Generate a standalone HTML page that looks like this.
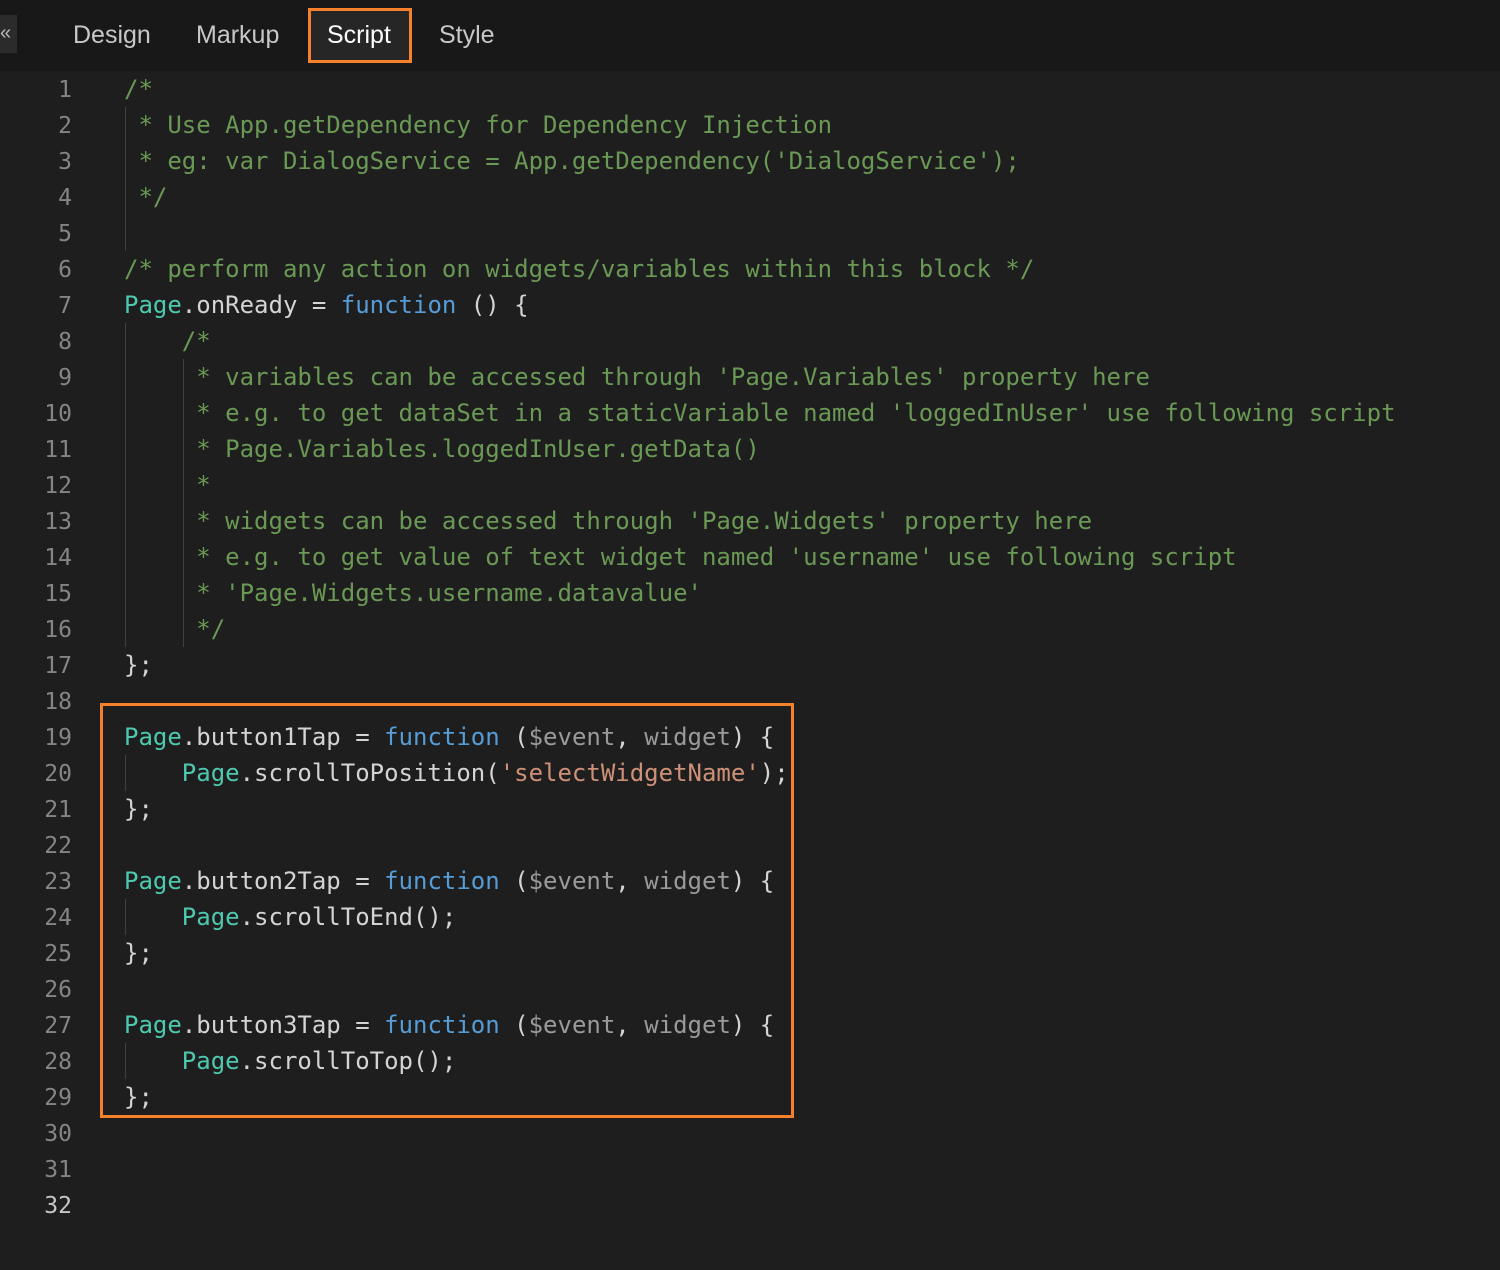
<!DOCTYPE html>
<html><head><meta charset="utf-8"><style>
*{margin:0;padding:0;box-sizing:border-box}
body{width:1500px;height:1270px;background:#1e1e1e;overflow:hidden;position:relative;font-family:"DejaVu Sans Mono","Liberation Mono",monospace}
.bar{position:absolute;left:0;top:0;width:1500px;height:71px;background:#181818}
.tab{position:absolute;top:21px;font:25px "Liberation Sans",sans-serif;color:#c8c8c8}
.coll{position:absolute;left:0;top:15px;width:17px;height:38px;background:#2b2b2b;color:#bbb;font:20px "Liberation Sans",sans-serif;line-height:36px}
.sel{position:absolute;left:308px;top:8px;width:104px;height:55px;border:3px solid #f5822a;background:#262626}
.ln{position:absolute;left:0;width:72px;text-align:right;color:#858585;font-size:23px;height:36px;line-height:38px}
.cl{position:absolute;left:124px;height:36px;line-height:36px;font-size:24px;color:#d4d4d4;white-space:pre}
.c{color:#6a9955}.p{color:#4ec9b0}.k{color:#569cd6}.s{color:#ce9178}.g{color:#9a9a9a}
.gd{position:absolute;width:1px;background:#404040}
.box{position:absolute;left:100px;top:703px;width:694px;height:415px;border:3px solid #f5822a}
</style></head><body>
<div class="bar"></div>
<div class="coll">«</div>
<div class="sel"></div>
<div class="tab" style="left:73px">Design</div>
<div class="tab" style="left:196px">Markup</div>
<div class="tab" style="left:327px;color:#fff">Script</div>
<div class="tab" style="left:439px">Style</div>

<div class="gd" style="left:125px;top:107px;height:144px"></div>
<div class="gd" style="left:125px;top:323px;height:324px"></div>
<div class="gd" style="left:183px;top:359px;height:288px"></div>
<div class="gd" style="left:125px;top:755px;height:36px"></div>
<div class="gd" style="left:125px;top:899px;height:36px"></div>
<div class="gd" style="left:125px;top:1043px;height:36px"></div>

<div class="ln" style="top:71px">1</div><div class="ln" style="top:107px">2</div><div class="ln" style="top:143px">3</div><div class="ln" style="top:179px">4</div><div class="ln" style="top:215px">5</div><div class="ln" style="top:251px">6</div><div class="ln" style="top:287px">7</div><div class="ln" style="top:323px">8</div><div class="ln" style="top:359px">9</div><div class="ln" style="top:395px">10</div><div class="ln" style="top:431px">11</div><div class="ln" style="top:467px">12</div><div class="ln" style="top:503px">13</div><div class="ln" style="top:539px">14</div><div class="ln" style="top:575px">15</div><div class="ln" style="top:611px">16</div><div class="ln" style="top:647px">17</div><div class="ln" style="top:683px">18</div><div class="ln" style="top:719px">19</div><div class="ln" style="top:755px">20</div><div class="ln" style="top:791px">21</div><div class="ln" style="top:827px">22</div><div class="ln" style="top:863px">23</div><div class="ln" style="top:899px">24</div><div class="ln" style="top:935px">25</div><div class="ln" style="top:971px">26</div><div class="ln" style="top:1007px">27</div><div class="ln" style="top:1043px">28</div><div class="ln" style="top:1079px">29</div><div class="ln" style="top:1115px">30</div><div class="ln" style="top:1151px">31</div><div class="ln" style="top:1187px;color:#c6c6c6">32</div>

<div class="cl c" style="top:71px">/*</div>
<div class="cl c" style="top:107px"> * Use App.getDependency for Dependency Injection</div>
<div class="cl c" style="top:143px"> * eg: var DialogService = App.getDependency('DialogService');</div>
<div class="cl c" style="top:179px"> */</div>
<div class="cl c" style="top:251px">/* perform any action on widgets/variables within this block */</div>
<div class="cl" style="top:287px"><span class="p">Page</span>.onReady = <span class="k">function</span> () {</div>
<div class="cl c" style="top:323px">    /*</div>
<div class="cl c" style="top:359px">     * variables can be accessed through 'Page.Variables' property here</div>
<div class="cl c" style="top:395px">     * e.g. to get dataSet in a staticVariable named 'loggedInUser' use following script</div>
<div class="cl c" style="top:431px">     * Page.Variables.loggedInUser.getData()</div>
<div class="cl c" style="top:467px">     *</div>
<div class="cl c" style="top:503px">     * widgets can be accessed through 'Page.Widgets' property here</div>
<div class="cl c" style="top:539px">     * e.g. to get value of text widget named 'username' use following script</div>
<div class="cl c" style="top:575px">     * 'Page.Widgets.username.datavalue'</div>
<div class="cl c" style="top:611px">     */</div>
<div class="cl" style="top:647px">};</div>
<div class="cl" style="top:719px"><span class="p">Page</span>.button1Tap = <span class="k">function</span> (<span class="g">$event</span>, <span class="g">widget</span>) {</div>
<div class="cl" style="top:755px">    <span class="p">Page</span>.scrollToPosition(<span class="s">'selectWidgetName'</span>);</div>
<div class="cl" style="top:791px">};</div>
<div class="cl" style="top:863px"><span class="p">Page</span>.button2Tap = <span class="k">function</span> (<span class="g">$event</span>, <span class="g">widget</span>) {</div>
<div class="cl" style="top:899px">    <span class="p">Page</span>.scrollToEnd();</div>
<div class="cl" style="top:935px">};</div>
<div class="cl" style="top:1007px"><span class="p">Page</span>.button3Tap = <span class="k">function</span> (<span class="g">$event</span>, <span class="g">widget</span>) {</div>
<div class="cl" style="top:1043px">    <span class="p">Page</span>.scrollToTop();</div>
<div class="cl" style="top:1079px">};</div>
<div class="box"></div>
</body></html>
